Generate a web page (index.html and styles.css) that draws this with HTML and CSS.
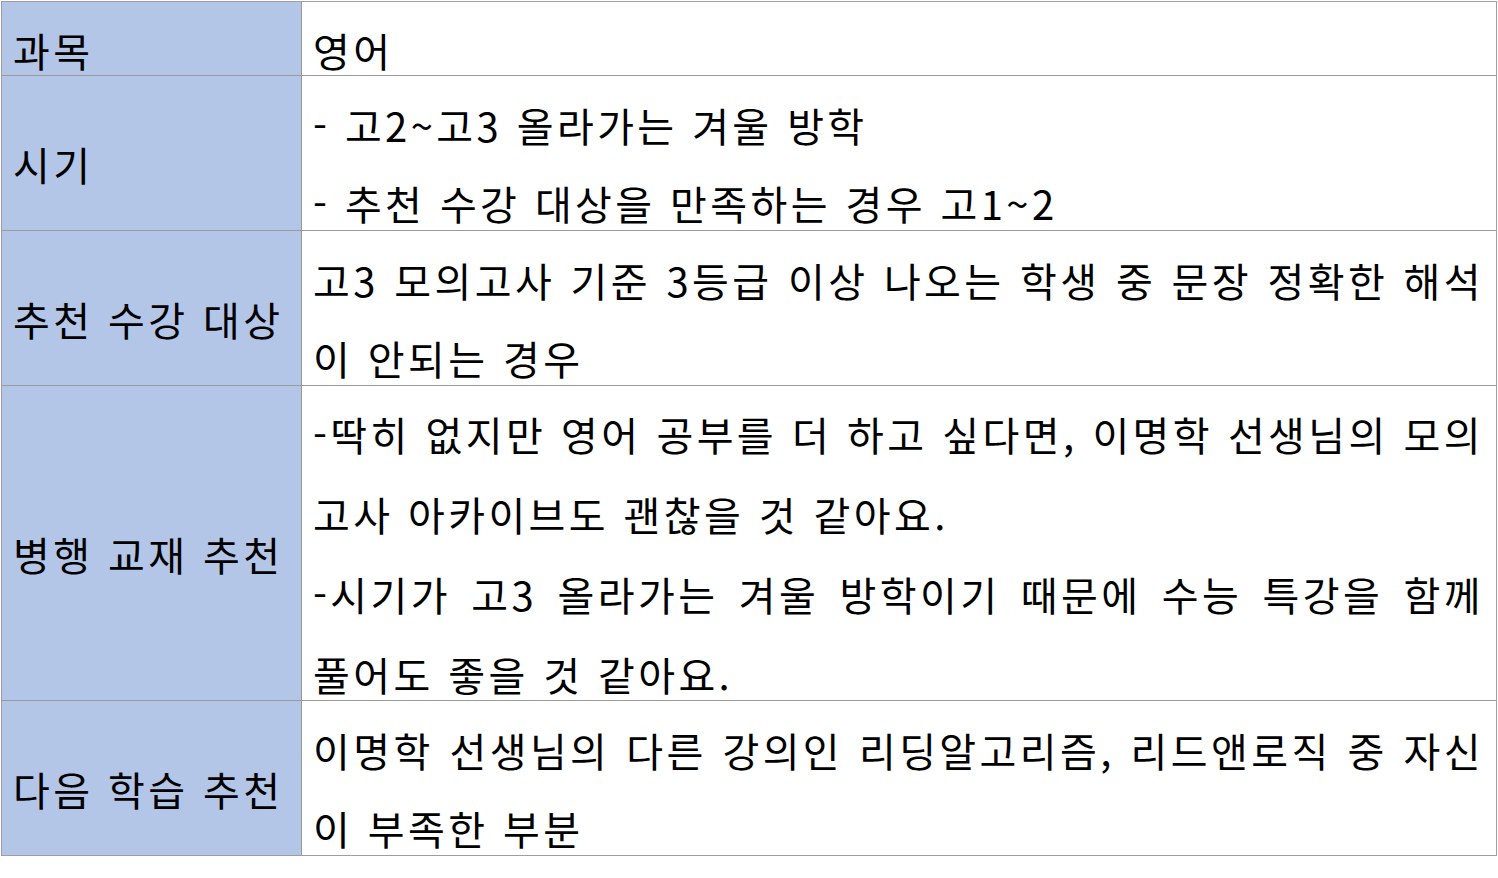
FILE: index.html
```html
<!DOCTYPE html>
<html lang="ko">
<head>
<meta charset="utf-8">
<link rel="stylesheet" href="styles.css">
</head>
<body>
<div class="info">
  <div class="hd r1">과목</div>
  <div class="bd r1"><span class="ln">영어</span></div>

  <div class="hd r2">시기</div>
  <div class="bd r2"><span class="ln">- 고2~고3 올라가는 겨울 방학</span><span class="ln">- 추천 수강 대상을 만족하는 경우 고1~2</span></div>

  <div class="hd r3">추천 수강 대상</div>
  <div class="bd r3"><span class="ln full">고3 모의고사 기준 3등급 이상 나오는 학생 중 문장 정확한 해석</span><span class="ln">이 안되는 경우</span></div>

  <div class="hd r4">병행 교재 추천</div>
  <div class="bd r4"><span class="ln full">-딱히 없지만 영어 공부를 더 하고 싶다면, 이명학 선생님의 모의</span><span class="ln">고사 아카이브도 괜찮을 것 같아요.</span><span class="ln full">-시기가 고3 올라가는 겨울 방학이기 때문에 수능 특강을 함께</span><span class="ln">풀어도 좋을 것 같아요.</span></div>

  <div class="hd r5 last">다음 학습 추천</div>
  <div class="bd r5 last"><span class="ln full">이명학 선생님의 다른 강의인 리딩알고리즘, 리드앤로직 중 자신</span><span class="ln">이 부족한 부분</span></div>
</div>
</body>
</html>
```

FILE: styles.css
```css
html, body {
  margin: 0;
  padding: 0;
  background: #ffffff;
}
body {
  padding: 1px 0 0 1px;
  font-family: "Malgun Gothic", "Noto Sans CJK KR", "Noto Sans", sans-serif;
  color: #000000;
}
.info {
  box-sizing: border-box;
  width: 1496px;
  border: 1px solid #9e9e9e;
  display: grid;
  grid-template-columns: 300px 1fr;
  grid-template-rows: 74px 155px 155px 315px 154px;
}
.hd, .bd {
  box-sizing: border-box;
  border-bottom: 1px solid #9a9a9a;
  font-size: 40px;
  letter-spacing: 3.4px;
  display: flex;
  flex-direction: column;
  justify-content: center;
  padding-top: 22px;
  min-height: 0;
}
.last {
  border-bottom: none;
}
.hd {
  background: #b4c6e7;
  border-right: 1px solid #9a9a9a;
  padding-left: 11px;
  white-space: nowrap;
  line-height: 78px;
}
.bd {
  padding-left: 11px;
  padding-right: 12px;
}
.ln {
  display: block;
  line-height: 78px;
  white-space: nowrap;
}
.r4 .ln {
  line-height: 80px;
}
.ln.full {
  text-align: justify;
  text-align-last: justify;
}
```
